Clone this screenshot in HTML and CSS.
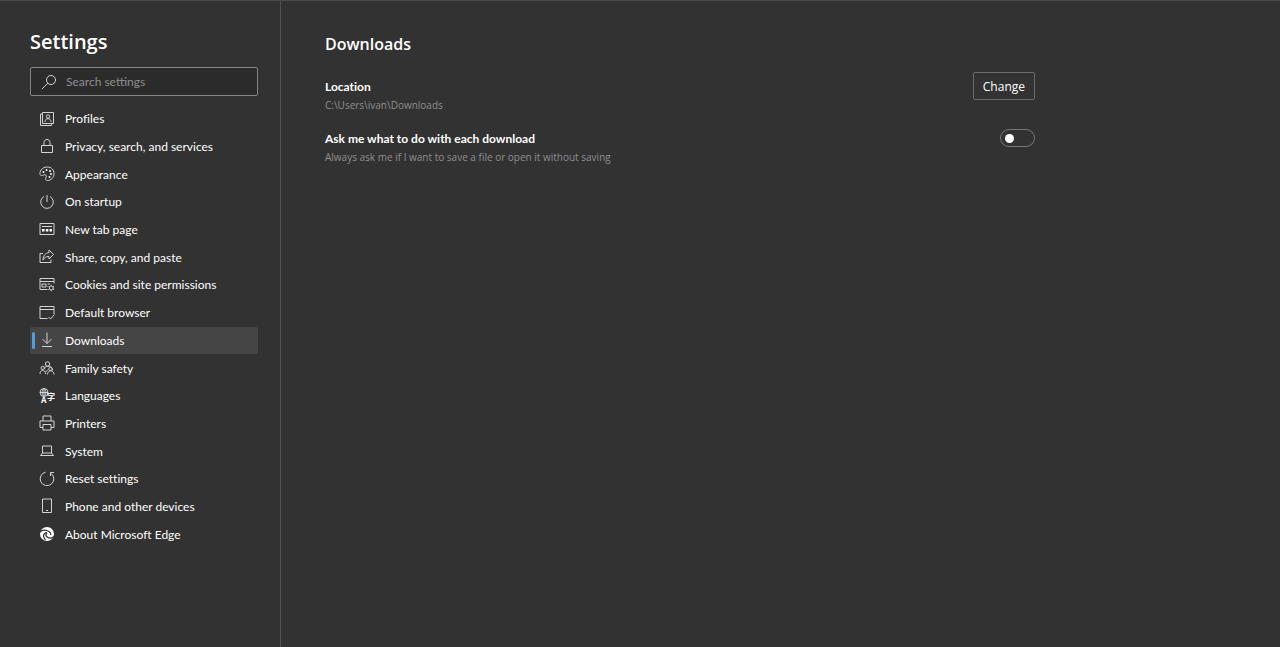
FILE: index.html
```html
<!DOCTYPE html>
<html lang="en">
<head>
  <meta charset="UTF-8">
  <title>Settings</title>
  <meta name="viewport" content="width=device-width, initial-scale=1">
  <link rel="stylesheet" href="styles.css">
</head>
<body>
<div class="layout">
  <!-- Sidebar -->
  <aside class="sidebar">
    <h1>Settings</h1>
    <label class="search">
      <svg class="icon" viewBox="0 0 16 16" aria-hidden="true"><circle cx="10" cy="6" r="4.5"/><path d="M6.8 9.2L1 15"/></svg>
      <input type="search" placeholder="Search settings" aria-label="Search settings">
    </label>
    <nav class="menu" aria-label="Settings sections">
      <a href="#profiles">
        <svg class="icon" viewBox="0 0 16 16" aria-hidden="true"><path d="M3.5 1.5h11v11h-11zM3.5 3h-2v11.500h11v-2"/><circle cx="9" cy="5.500" r="1.700"/><path d="M6 11c0-4.500 6-4.500 6 0"/></svg>
        Profiles
      </a>
      <a href="#privacy">
        <svg class="icon" viewBox="0 0 16 16" aria-hidden="true"><path d="M2.500 6.500h11v7h-11zM5 6.500V3.500c0-4 6-4 6 0v3"/></svg>
        Privacy, search, and services
      </a>
      <a href="#appearance">
        <svg class="icon" viewBox="0 0 16 16" aria-hidden="true"><path d="M1 6.500C2 2.500 5 1 8.500 1c4 0 6.500 3 6.500 6.500 0 4-3 7-6.500 7-2 0-2.500-1.500-1.500-3 1-2-.500-3.500-2.500-2.500C2 10.500.500 9 1 6.500z"/><g class="fill"><circle cx="4.500" cy="6" r="1"/><circle cx="7.500" cy="4" r="1"/><circle cx="11" cy="5" r="1"/><circle cx="12" cy="8" r="1"/><circle cx="10.500" cy="11" r="1"/></g></svg>
        Appearance
      </a>
      <a href="#startup">
        <svg class="icon" viewBox="0 0 16 16" aria-hidden="true"><path d="M8 1v7M5 2.500a6.300 6.300 0 1 0 6 0"/></svg>
        On startup
      </a>
      <a href="#newtab">
        <svg class="icon" viewBox="0 0 16 16" aria-hidden="true"><path d="M1 1.500h14v11H1zM3 4.500h10"/><path class="fill" d="M3 7h2.500v2.500H3zM6.800 7h2.500v2.500H6.800zM10.500 7H13v2.500h-2.500z"/></svg>
        New tab page
      </a>
      <a href="#share">
        <svg class="icon" viewBox="0 0 16 16" aria-hidden="true"><path d="M4 4.500H1v9h11v-3M10 1L14.500 5.500 10 10V7.500C7 7.500 5.500 8.500 4 11 4.200 6.500 6.500 4 10 3.500z"/></svg>
        Share, copy, and paste
      </a>
      <a href="#cookies">
        <svg class="icon" viewBox="0 0 16 16" aria-hidden="true"><path d="M8.500 12.500H1v-11h14v5M1 4.500h14M3 7h4v3H3zM8.500 7H11M8.500 9.500H9"/><circle cx="12.200" cy="11" r="2"/><path d="M12.200 7.800V9M12.200 13v1.200M9.400 9.400l1 .6M14 12l1 .6M15 9.400l-1 .6M10.400 12l-1 .6"/></svg>
        Cookies and site permissions
      </a>
      <a href="#default">
        <svg class="icon" viewBox="0 0 16 16" aria-hidden="true"><path d="M8.500 13.500H1v-12h14v7.500M1 4.500h14M9.500 12l2 2L15.500 9.500"/></svg>
        Default browser
      </a>
      <a href="#downloads" class="active" aria-current="page">
        <svg class="icon" viewBox="0 0 16 16" aria-hidden="true"><path d="M8 .5v11M3.500 7L8 11.500 12.500 7M3 14.500h10"/></svg>
        Downloads
      </a>
      <a href="#family">
        <svg class="icon" viewBox="0 0 16 16" aria-hidden="true"><circle cx="8.500" cy="4" r="2.200"/><circle cx="3.700" cy="8" r="1.700"/><circle cx="11.500" cy="9" r="1.700"/><path d="M5.500 9c0-1.500 1-2.800 3-2.800 3.500 0 5 1.500 5 4M1 14c0-5 5.500-5 5.500 0M8.500 14.500c0-5 6.500-5 6.500 0M6.500 12L9 9.500"/></svg>
        Family safety
      </a>
      <a href="#languages">
        <svg class="icon" viewBox="0 0 16 16" aria-hidden="true"><circle cx="5" cy="4.500" r="4"/><path d="M1 4.500h8M5 .5v8M5 .5c-2.500 2-2.500 6 0 8M5 .5c2.500 2 2.500 6 0 8"/><text x="2" y="15">A</text><text x="8" y="12">字</text></svg>
        Languages
      </a>
      <a href="#printers">
        <svg class="icon" viewBox="0 0 16 16" aria-hidden="true"><path d="M4 6V1h8v5M4 12.500H1V6h14v6.500h-3M4 9.500h8V15H4z"/></svg>
        Printers
      </a>
      <a href="#system">
        <svg class="icon" viewBox="0 0 16 16" aria-hidden="true"><path d="M3.500 3h9v7h-9zM3.500 10l-2 2.500h13l-2-2.500"/></svg>
        System
      </a>
      <a href="#reset">
        <svg class="icon" viewBox="0 0 16 16" aria-hidden="true"><path d="M6.500 1.200a6.800 6.800 0 1 0 5.700 1.300M11.500 5V1.500H15"/></svg>
        Reset settings
      </a>
      <a href="#phone">
        <svg class="icon" viewBox="0 0 16 16" aria-hidden="true"><path d="M3.500 1h9v13.500h-9zM7 12.500h2"/></svg>
        Phone and other devices
      </a>
      <a href="#about">
        <svg class="icon" viewBox="0 0 16 16" aria-hidden="true"><circle class="fill" cx="8" cy="8" r="7"/><path class="cut" d="M0 6.500C3 4 7 3.500 10 5.500c1.500 1 2 2.500 1.500 3.500M6.500 14c-3-3-2.500-7 1.500-7.500M16 9.500c-2.500 3-6 3.500-8.500 1-.8-1-.6-2.500.5-3.500"/></svg>
        About Microsoft Edge
      </a>
    </nav>
  </aside>

  <!-- Content -->
  <main class="content">
    <h2>Downloads</h2>
    <section class="row">
      <div>
        <h3>Location</h3>
        <p>C:\Users\ivan\Downloads</p>
      </div>
      <button type="button">Change</button>
    </section>
    <section class="row">
      <div>
        <h3><label for="ask">Ask me what to do with each download</label></h3>
        <p>Always ask me if I want to save a file or open it without saving</p>
      </div>
      <input type="checkbox" class="toggle" id="ask" role="switch">
    </section>
  </main>
</div>
</body>
</html>
```
FILE: styles.css
```css
* {
  box-sizing: border-box;
}
body {
  margin: 0;
  background: #323232;
  color: #fff;
  font-family: "Segoe UI", Lato, "Open Sans", sans-serif;
  font-size: 12px;
  font-variant-ligatures: none;
}
h1, h2, h3, p {
  margin: 0;
}
h1, h2, .row p, button {
  font-family: "Segoe UI", "Open Sans", sans-serif;
}
.layout {
  display: flex;
  min-height: 100vh;
  border-top: 1px solid #4a4a4a;
}
.sidebar {
  flex: 0 0 281px;
  padding: 28px 22px 28px 30px;
  border-right: 1px solid #505050;
}
h1 {
  font-size: 20px;
  font-weight: 600;
  line-height: 26px;
}
.search {
  display: flex;
  align-items: center;
  gap: 9px;
  height: 29px;
  margin: 12px 0 9px;
  padding-left: 10px;
  border: 1px solid #858585;
  border-radius: 2px;
  background: #2b2b2b;
}
.search input {
  flex: 1;
  min-width: 0;
  padding: 0;
  border: 0;
  outline: none;
  background: none;
  color: #fff;
  font-family: inherit;
  font-size: 12px;
}
.search input::placeholder {
  color: #8f8f8f;
}
.icon {
  flex: none;
  width: 16px;
  height: 16px;
  fill: none;
  stroke: #d4d4d4;
  stroke-width: 1;
}
.icon .fill {
  fill: #fff;
  stroke: none;
}
.icon .cut {
  stroke: #323232;
  stroke-width: 1.2;
}
.icon text {
  fill: #fff;
  stroke: none;
  font: bold 8px "Open Sans", "Noto Sans CJK SC", sans-serif;
}
.menu {
  display: grid;
  grid-auto-rows: 1fr;
  min-height: 443px;
}
.menu a {
  display: flex;
  align-items: center;
  gap: 10px;
  padding-left: 9px;
  color: #fff;
  text-decoration: none;
  border-radius: 2px;
}
.menu a:hover {
  background: #3c3c3c;
}
.menu .active {
  position: relative;
  background: #454545;
}
.menu .active::before {
  content: "";
  position: absolute;
  left: 2px;
  top: 5px;
  bottom: 5px;
  width: 3px;
  border-radius: 2px;
  background: #4f9fe0;
}
.content {
  flex: 1;
  max-width: 798px;
  padding: 31px 44px;
}
h2 {
  margin-bottom: 16px;
  font-size: 16px;
  font-weight: 600;
  line-height: 24px;
}
.row {
  display: flex;
  justify-content: space-between;
  align-items: flex-start;
  margin-bottom: 16px;
}
h3 {
  font-size: 12px;
  font-weight: 700;
  line-height: 18px;
}
.row > div {
  padding-top: 6px;
  margin-bottom: -6px;
}
.row p {
  color: #8f8f8f;
  font-size: 10px;
  line-height: 18px;
}
button {
  height: 28px;
  padding: 0 9px;
  border: 1px solid #6b6b6b;
  border-radius: 2px;
  background: none;
  color: #fff;
  font-size: 12px;
}
.toggle {
  appearance: none;
  width: 35px;
  height: 18px;
  margin: 5px 0 0;
  padding: 4px;
  border: 1px solid #777;
  border-radius: 9px;
}
.toggle::before {
  content: "";
  display: block;
  width: 9px;
  height: 9px;
  border-radius: 50%;
  background: #fff;
}
.toggle:checked {
  background: #4f9fe0;
}
.toggle:checked::before {
  margin-left: auto;
}
@media (max-width: 700px) {
  .layout { flex-direction: column; }
  .sidebar { flex: none; border-right: 0; }
  .content { padding: 20px 30px; }
}
```
